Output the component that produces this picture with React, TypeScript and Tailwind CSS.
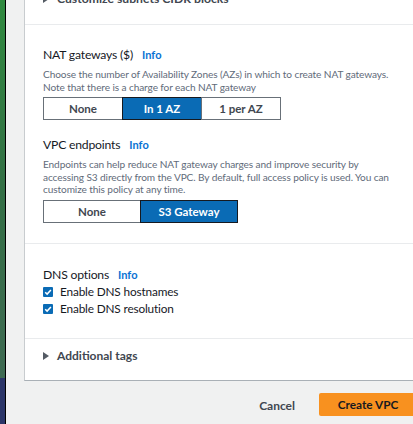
import type { ReactNode } from "react";

const FONT = { fontFamily: 'Lato, "Open Sans", Arial, sans-serif' };

/* ------------------------------------------------------------ Pieces */
function Label({ children }: { children: ReactNode }) {
  return (
    <div className="flex h-4 items-center gap-[9px]">
      <span className="text-[12.2px] tracking-[-0.2px] text-[#16191f]">{children}</span>
      <span className="text-[11px] font-bold text-[#0972d3]">Info</span>
    </div>
  );
}

function Desc({ children }: { children: ReactNode }) {
  return (
    <p className="whitespace-nowrap text-[10.1px] leading-[12.6px] tracking-[-0.1px] text-[#5f6b7a]">{children}</p>
  );
}

function Segmented({ options, selected, width }: { options: string[]; selected: number; width: string }) {
  return (
    <div className="flex h-[23px]">
      {options.map((o, i) => (
        <div
          key={o}
          className={`${width} flex items-center justify-center border text-[11.5px] font-bold ${
            i === selected
              ? "border-[#16191f] bg-[#0a6bb5] text-white"
              : "border-[#687078] bg-white text-[#414750]"
          } ${i > 0 ? "-ml-px" : ""}`}
        >
          {o}
        </div>
      ))}
    </div>
  );
}

function Check({ children }: { children: ReactNode }) {
  return (
    <div className="flex h-[17px] items-center gap-[7px]">
      <span className="grid h-[10px] w-[10px] place-items-center rounded-[1px] bg-[#0a6bb5]">
        <svg viewBox="0 0 10 10" className="h-[10px] w-[10px]" fill="none">
          <path d="M2.2 5.2l1.9 1.9 3.8-4.2" stroke="white" strokeWidth="1.5" />
        </svg>
      </span>
      <span className="text-[11.8px] tracking-[-0.15px] text-[#16191f]">{children}</span>
    </div>
  );
}

function Caret() {
  return (
    <svg viewBox="0 0 6 8" className="h-[8px] w-[6px]">
      <path d="M0 0l6 4-6 4z" fill="#545b64" />
    </svg>
  );
}

/* ------------------------------------------------------------ App */
export default function App() {
  return (
    <div className="flex h-[424px] w-[413px] overflow-hidden bg-[#f0f1f1]" style={FONT}>
      <div className="flex w-[5px] shrink-0 flex-col">
        <div className="h-[378px] bg-gradient-to-b from-[#2f8a3f] via-[#336f45] to-[#3e6a52]" />
        <div className="flex-1 bg-[#2b3568]" />
      </div>
      <div className="w-px shrink-0 bg-black" />
      <div className="w-[18px] shrink-0" />

      <div className="flex min-w-0 flex-1 flex-col">
        <div className="h-[381px] overflow-hidden border-b border-l border-b-[#a9b0b6] border-l-[#c8cccf] bg-white">
          <div className="h-[24px] overflow-hidden pl-[18px]">
            <div className="-mt-[9px] flex h-4 items-center gap-[8px] text-[12.2px] font-bold text-[#414750]">
              <Caret />
              <span>Customize subnets CIDR blocks</span>
            </div>
          </div>

          <div className="h-[219px] border-t border-[#e9ebed] pl-[18px] pt-[22px]">
            <Label>NAT gateways ($)</Label>
            <div className="mt-[5px]">
              <Desc>
                Choose the number of Availability Zones (AZs) in which to create NAT gateways.
                <br />
                Note that there is a charge for each NAT gateway
              </Desc>
            </div>
            <div className="mt-[4px]">
              <Segmented options={["None", "In 1 AZ", "1 per AZ"]} selected={1} width="w-[80px]" />
            </div>
            <div className="mt-[17px]">
              <Label>VPC endpoints</Label>
            </div>
            <div className="mt-[5px]">
              <Desc>
                Endpoints can help reduce NAT gateway charges and improve security by
                <br />
                accessing S3 directly from the VPC. By default, full access policy is used. You can
                <br />
                customize this policy at any time.
              </Desc>
            </div>
            <div className="mt-[4px]">
              <Segmented options={["None", "S3 Gateway"]} selected={1} width="w-[98px]" />
            </div>
          </div>

          <div className="h-[95px] border-t border-[#e9ebed] pl-[18px] pt-[23px]">
            <Label>DNS options</Label>
            <div>
              <Check>Enable DNS hostnames</Check>
              <Check>Enable DNS resolution</Check>
            </div>
          </div>

          <div className="h-[42px] border-t border-[#e9ebed] pl-[18px] pt-[9px]">
            <div className="flex h-4 items-center gap-[8px] text-[12px] font-bold text-[#414750]">
              <Caret />
              <span>Additional tags</span>
            </div>
          </div>
        </div>

        <div className="flex flex-1 items-start justify-end pt-[12px]">
          <span className="mr-[24px] mt-[4px] text-[12px] font-bold text-[#414750]">Cancel</span>
          <div className="-mr-[4px] flex h-[23px] w-[98px] items-center justify-center rounded-[2px] bg-[#f8911f] text-[11.8px] font-bold text-[#16191f]">
            Create VPC
          </div>
        </div>
      </div>
    </div>
  );
}
